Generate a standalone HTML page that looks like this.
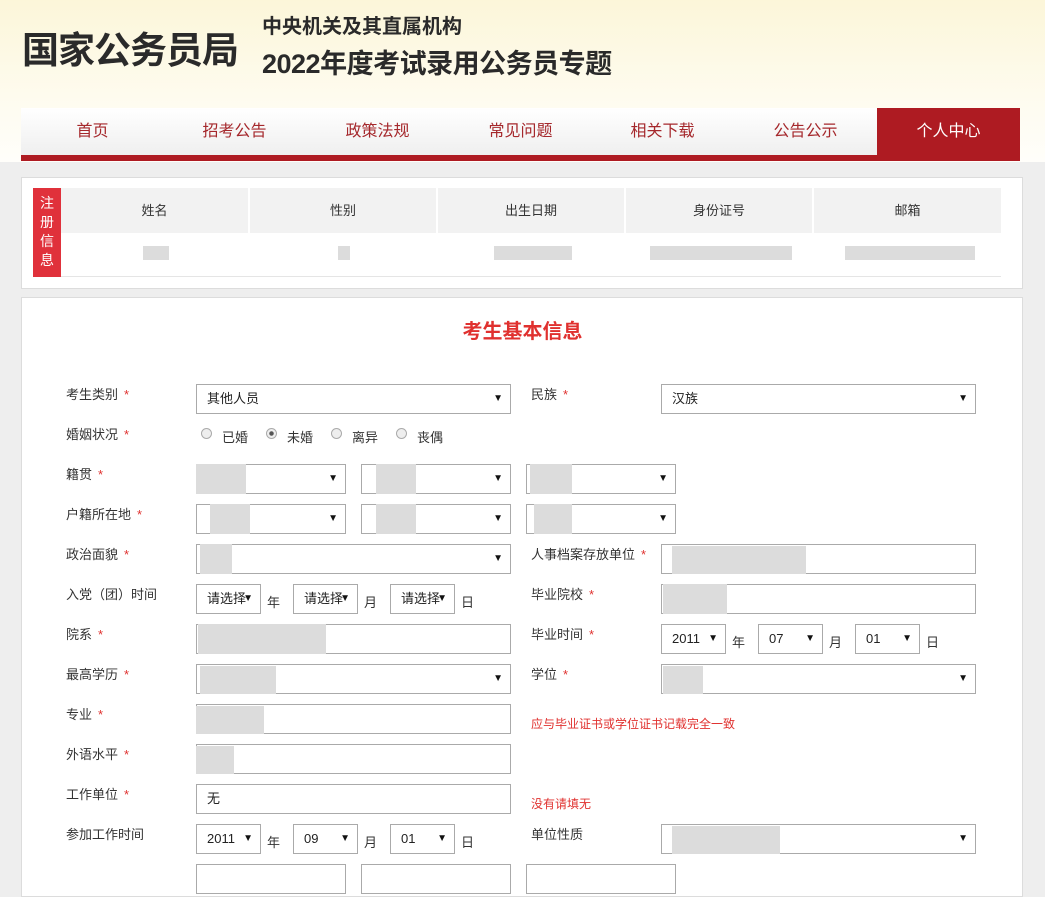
<!DOCTYPE html>
<html><head><meta charset="utf-8"><style>
*{margin:0;padding:0;box-sizing:border-box}
body{width:1045px;height:868px;overflow:hidden;background:#eeeeee;font-family:"Liberation Sans","Noto Sans CJK SC",sans-serif;position:relative;color:#333}
.a{position:absolute}
#hdr{left:0;top:0;width:1045px;height:162px;background:linear-gradient(#fcf6d9,#fefcf2 70%,#fffefa)}
.t1{left:22px;top:20px;font-size:37px;font-weight:bold;color:#2a2a2a;letter-spacing:-1px}
.t2{left:262px;top:10px;font-size:20px;font-weight:bold;color:#2a2a2a}
.t3{left:262px;top:42px;font-size:27px;font-weight:bold;color:#2a2a2a;letter-spacing:-0.5px}
#nav{left:21px;top:108px;width:999px;height:47px;background:linear-gradient(#fff,#efefef)}
#bar{left:21px;top:155px;width:999px;height:6px;background:#ae1b22}
.nv{top:108px;height:47px;line-height:47px;font-size:16px;color:#a5282c;text-align:center;width:143px}
.act{background:#ae1b22;color:#fff}
.p{background:#fff;border:1px solid #dcdcdc}
.th{top:188px;height:45px;line-height:45px;background:#f2f2f2;text-align:center;font-size:13px;color:#333}
.bl{background:#dcdcdc}
.lb{font-size:13px;color:#333}
.lb i{color:#e0312f;font-style:normal;margin-left:6px}
.in{height:30px;border:1px solid #aaa;background:#fff;font-size:13px;line-height:28px;padding-left:10px;color:#222}
.sel::after{content:"▼";position:absolute;right:7px;top:0;font-size:10px;color:#111}
.u{font-size:13px}
.red{color:#e0312f;font-size:12px}
.rd{width:11px;height:11px;border-radius:50%;border:1px solid #aaa;background:#eee}
</style></head><body>
<div id="hdr" class="a"></div>
<div class="a t1">国家公务员局</div>
<div class="a t2">中央机关及其直属机构</div>
<div class="a t3">2022年度考试录用公务员专题</div>
<div id="nav" class="a"></div>
<div id="bar" class="a"></div>
<div class="a nv" style="left:21px">首页</div>
<div class="a nv" style="left:163px">招考公告</div>
<div class="a nv" style="left:306px">政策法规</div>
<div class="a nv" style="left:449px">常见问题</div>
<div class="a nv" style="left:591px">相关下载</div>
<div class="a nv" style="left:734px">公告公示</div>
<div class="a nv act" style="left:877px">个人中心</div>

<div class="a p" style="left:21px;top:177px;width:1002px;height:112px"></div>
<div class="a" style="left:33px;top:188px;width:28px;height:89px;background:#e0313b;color:#fff;font-size:14px;line-height:19px;text-align:center;padding-top:6px">注<br>册<br>信<br>息</div>
<div class="a th" style="left:61px;width:187px">姓名</div>
<div class="a th" style="left:250px;width:186px">性别</div>
<div class="a th" style="left:438px;width:186px">出生日期</div>
<div class="a th" style="left:626px;width:186px">身份证号</div>
<div class="a th" style="left:814px;width:187px">邮箱</div>
<div class="a" style="left:61px;top:276px;width:940px;height:1px;background:#e5e5e5"></div>
<div class="a bl" style="left:143px;top:246px;width:26px;height:14px"></div>
<div class="a bl" style="left:338px;top:246px;width:12px;height:14px"></div>
<div class="a bl" style="left:494px;top:246px;width:78px;height:14px"></div>
<div class="a bl" style="left:650px;top:246px;width:142px;height:14px"></div>
<div class="a bl" style="left:845px;top:246px;width:130px;height:14px"></div>

<div class="a p" style="left:21px;top:297px;width:1002px;height:600px"></div>
<div class="a" style="left:0;top:315px;width:1045px;text-align:center;font-size:20px;font-weight:bold;color:#e0312f">考生基本信息</div>

<!-- row 1 -->
<div class="a lb" style="left:66px;top:384px">考生类别<i>*</i></div>
<div class="a in sel" style="left:196px;top:384px;width:315px">其他人员</div>
<div class="a lb" style="left:531px;top:384px">民族<i>*</i></div>
<div class="a in sel" style="left:661px;top:384px;width:315px">汉族</div>
<!-- row 2 -->
<div class="a lb" style="left:66px;top:424px">婚姻状况<i>*</i></div>
<div class="a rd" style="left:201px;top:428px"></div><div class="a u" style="left:222px;top:427px">已婚</div>
<div class="a rd" style="left:266px;top:428px;background:radial-gradient(#555 30%,#eee 40%)"></div><div class="a u" style="left:287px;top:427px">未婚</div>
<div class="a rd" style="left:331px;top:428px"></div><div class="a u" style="left:352px;top:427px">离异</div>
<div class="a rd" style="left:396px;top:428px"></div><div class="a u" style="left:417px;top:427px">丧偶</div>
<!-- row 3 -->
<div class="a lb" style="left:66px;top:464px">籍贯<i>*</i></div>
<div class="a in sel" style="left:196px;top:464px;width:150px"></div>
<div class="a in sel" style="left:361px;top:464px;width:150px"></div>
<div class="a in sel" style="left:526px;top:464px;width:150px"></div>
<div class="a bl" style="left:196px;top:464px;width:50px;height:30px"></div>
<div class="a bl" style="left:376px;top:464px;width:40px;height:30px"></div>
<div class="a bl" style="left:530px;top:464px;width:42px;height:30px"></div>
<!-- row 4 -->
<div class="a lb" style="left:66px;top:504px">户籍所在地<i>*</i></div>
<div class="a in sel" style="left:196px;top:504px;width:150px"></div>
<div class="a in sel" style="left:361px;top:504px;width:150px"></div>
<div class="a in sel" style="left:526px;top:504px;width:150px"></div>
<div class="a bl" style="left:210px;top:504px;width:40px;height:30px"></div>
<div class="a bl" style="left:376px;top:504px;width:40px;height:30px"></div>
<div class="a bl" style="left:534px;top:504px;width:38px;height:30px"></div>
<!-- row 5 -->
<div class="a lb" style="left:66px;top:544px">政治面貌<i>*</i></div>
<div class="a in sel" style="left:196px;top:544px;width:315px"></div>
<div class="a bl" style="left:200px;top:544px;width:32px;height:30px"></div>
<div class="a lb" style="left:531px;top:544px">人事档案存放单位<i>*</i></div>
<div class="a in" style="left:661px;top:544px;width:315px"></div>
<div class="a bl" style="left:672px;top:546px;width:134px;height:28px"></div>
<!-- row 6 -->
<div class="a lb" style="left:66px;top:584px">入党（团）时间</div>
<div class="a in sel" style="left:196px;top:584px;width:65px">请选择</div><div class="a u" style="left:267px;top:592px">年</div>
<div class="a in sel" style="left:293px;top:584px;width:65px">请选择</div><div class="a u" style="left:364px;top:592px">月</div>
<div class="a in sel" style="left:390px;top:584px;width:65px">请选择</div><div class="a u" style="left:461px;top:592px">日</div>
<div class="a lb" style="left:531px;top:584px">毕业院校<i>*</i></div>
<div class="a in" style="left:661px;top:584px;width:315px"></div>
<div class="a bl" style="left:663px;top:584px;width:64px;height:30px"></div>
<!-- row 7 -->
<div class="a lb" style="left:66px;top:624px">院系<i>*</i></div>
<div class="a in" style="left:196px;top:624px;width:315px"></div>
<div class="a bl" style="left:198px;top:624px;width:128px;height:30px"></div>
<div class="a lb" style="left:531px;top:624px">毕业时间<i>*</i></div>
<div class="a in sel" style="left:661px;top:624px;width:65px">2011</div><div class="a u" style="left:732px;top:632px">年</div>
<div class="a in sel" style="left:758px;top:624px;width:65px">07</div><div class="a u" style="left:829px;top:632px">月</div>
<div class="a in sel" style="left:855px;top:624px;width:65px">01</div><div class="a u" style="left:926px;top:632px">日</div>
<!-- row 8 -->
<div class="a lb" style="left:66px;top:664px">最高学历<i>*</i></div>
<div class="a in sel" style="left:196px;top:664px;width:315px"></div>
<div class="a bl" style="left:200px;top:666px;width:76px;height:28px"></div>
<div class="a lb" style="left:531px;top:664px">学位<i>*</i></div>
<div class="a in sel" style="left:661px;top:664px;width:315px"></div>
<div class="a bl" style="left:663px;top:666px;width:40px;height:28px"></div>
<!-- row 9 -->
<div class="a lb" style="left:66px;top:704px">专业<i>*</i></div>
<div class="a in" style="left:196px;top:704px;width:315px"></div>
<div class="a bl" style="left:196px;top:706px;width:68px;height:28px"></div>
<div class="a red" style="left:531px;top:715px">应与毕业证书或学位证书记载完全一致</div>
<!-- row 10 -->
<div class="a lb" style="left:66px;top:744px">外语水平<i>*</i></div>
<div class="a in" style="left:196px;top:744px;width:315px"></div>
<div class="a bl" style="left:196px;top:746px;width:38px;height:28px"></div>
<!-- row 11 -->
<div class="a lb" style="left:66px;top:784px">工作单位<i>*</i></div>
<div class="a in" style="left:196px;top:784px;width:315px">无</div>
<div class="a red" style="left:531px;top:795px">没有请填无</div>
<!-- row 12 -->
<div class="a lb" style="left:66px;top:824px">参加工作时间</div>
<div class="a in sel" style="left:196px;top:824px;width:65px">2011</div><div class="a u" style="left:267px;top:832px">年</div>
<div class="a in sel" style="left:293px;top:824px;width:65px">09</div><div class="a u" style="left:364px;top:832px">月</div>
<div class="a in sel" style="left:390px;top:824px;width:65px">01</div><div class="a u" style="left:461px;top:832px">日</div>
<div class="a lb" style="left:531px;top:824px">单位性质</div>
<div class="a in sel" style="left:661px;top:824px;width:315px"></div>
<div class="a bl" style="left:672px;top:826px;width:108px;height:28px"></div>
<!-- row 13 -->
<div class="a in" style="left:196px;top:864px;width:150px"></div>
<div class="a in" style="left:361px;top:864px;width:150px"></div>
<div class="a in" style="left:526px;top:864px;width:150px"></div>
</body></html>
